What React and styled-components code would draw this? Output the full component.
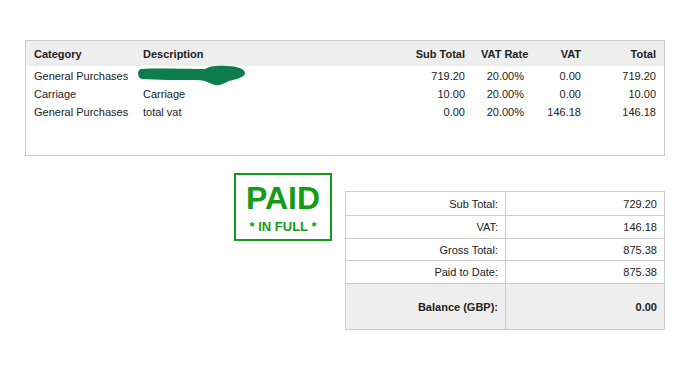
import React from "react";
import styled, { createGlobalStyle } from "styled-components";

const GlobalStyle = createGlobalStyle`
  body {
    margin: 0;
    background: #fff;
    font-family: "Liberation Sans", Arial, sans-serif;
    color: #222;
  }
`;

const Page = styled.div`
  padding: 40px 0 0 25px;
  width: 640px;
`;

const ItemsBox = styled.div`
  height: 114px;
  border: 1px solid #ccc;
`;

const ItemsTable = styled.table`
  width: 100%;
  border-collapse: collapse;
  table-layout: fixed;
  font-size: 11px;
`;

const HeadCell = styled.th`
  height: 25px;
  padding: 0 8px;
  background: #eee;
  font-weight: bold;
  text-align: ${(p) => (p.$right ? "right" : "left")};
  white-space: nowrap;
`;

const Cell = styled.td`
  height: 16px;
  padding: 2px 8px 0;
  text-align: ${(p) => (p.$right ? "right" : "left")};
  white-space: nowrap;
`;

const Redacted = styled.span`
  position: relative;
  display: inline-block;
  width: 108px;
  height: 12px;
  vertical-align: middle;

  svg {
    position: absolute;
    left: -6px;
    top: -6px;
  }
`;

const Bottom = styled.div`
  display: flex;
  justify-content: flex-end;
  align-items: flex-start;
  gap: 13px;
`;

const Stamp = styled.div`
  margin-top: 17px;
  width: 94px;
  height: 64px;
  border: 2px solid #169b16;
  color: #169b16;
  font-weight: bold;
  text-align: center;
`;

const StampMain = styled.div`
  font-size: 32px;
  line-height: 32px;
  margin-top: 7px;
`;

const StampSub = styled.div`
  font-size: 13px;
  line-height: 14px;
  margin-top: 6px;
`;

const Summary = styled.table`
  margin-top: 35px;
  width: 319px;
  border-collapse: collapse;
  table-layout: fixed;
  font-size: 11px;
`;

const SumRow = styled.tr`
  height: ${(p) => p.$h}px;
  background: ${(p) => (p.$total ? "#eee" : "#fff")};
  font-weight: ${(p) => (p.$total ? "bold" : "normal")};
`;

const SumCell = styled.td`
  border: 1px solid #ccc;
  padding: 0 7px 0 8px;
  text-align: right;
  white-space: nowrap;
`;

const items = [
  { cat: "General Purchases", desc: null, sub: "719.20", rate: "20.00%", vat: "0.00", total: "719.20" },
  { cat: "Carriage", desc: "Carriage", sub: "10.00", rate: "20.00%", vat: "0.00", total: "10.00" },
  { cat: "General Purchases", desc: "total vat", sub: "0.00", rate: "20.00%", vat: "146.18", total: "146.18" },
];

const totals = [
  { label: "Sub Total:", value: "729.20", h: 24 },
  { label: "VAT:", value: "146.18", h: 23 },
  { label: "Gross Total:", value: "875.38", h: 22 },
  { label: "Paid to Date:", value: "875.38", h: 23 },
  { label: "Balance (GBP):", value: "0.00", h: 46, total: true },
];

function Scribble() {
  return (
    <Redacted>
      <svg width="112" height="23" viewBox="0 0 112 23">
        <path
          fill="#0d7d4d"
          d="M4 4 C 20 3, 50 4, 68 4 C 72 1, 80 0, 90 1 C 100 1, 108 4, 108 8 C 108 12, 100 14, 92 16 C 86 19, 82 21, 78 20 C 72 18, 68 15, 60 15 C 40 15, 20 15, 5 14 C 0 14, 0 4, 4 4 Z"
        />
      </svg>
    </Redacted>
  );
}

export default function App() {
  return (
    <>
      <GlobalStyle />
      <Page>
        <ItemsBox>
          <ItemsTable>
            <colgroup>
              <col style={{ width: 109 }} />
              <col style={{ width: 268 }} />
              <col style={{ width: 70 }} />
              <col style={{ width: 59 }} />
              <col style={{ width: 57 }} />
              <col style={{ width: 75 }} />
            </colgroup>
            <thead>
              <tr>
                <HeadCell>Category</HeadCell>
                <HeadCell>Description</HeadCell>
                <HeadCell $right>Sub Total</HeadCell>
                <HeadCell $right>VAT Rate</HeadCell>
                <HeadCell $right>VAT</HeadCell>
                <HeadCell $right>Total</HeadCell>
              </tr>
            </thead>
            <tbody>
              {items.map((it, i) => (
                <tr key={i}>
                  <Cell>{it.cat}</Cell>
                  <Cell>{it.desc ?? <Scribble />}</Cell>
                  <Cell $right>{it.sub}</Cell>
                  <Cell $right>{it.rate}</Cell>
                  <Cell $right>{it.vat}</Cell>
                  <Cell $right>{it.total}</Cell>
                </tr>
              ))}
            </tbody>
          </ItemsTable>
        </ItemsBox>
        <Bottom>
          <Stamp>
            <StampMain>PAID</StampMain>
            <StampSub>* IN FULL *</StampSub>
          </Stamp>
          <Summary>
            <colgroup>
              <col style={{ width: 160 }} />
              <col style={{ width: 159 }} />
            </colgroup>
            <tbody>
              {totals.map((t) => (
                <SumRow key={t.label} $h={t.h} $total={t.total}>
                  <SumCell>{t.label}</SumCell>
                  <SumCell>{t.value}</SumCell>
                </SumRow>
              ))}
            </tbody>
          </Summary>
        </Bottom>
      </Page>
    </>
  );
}
